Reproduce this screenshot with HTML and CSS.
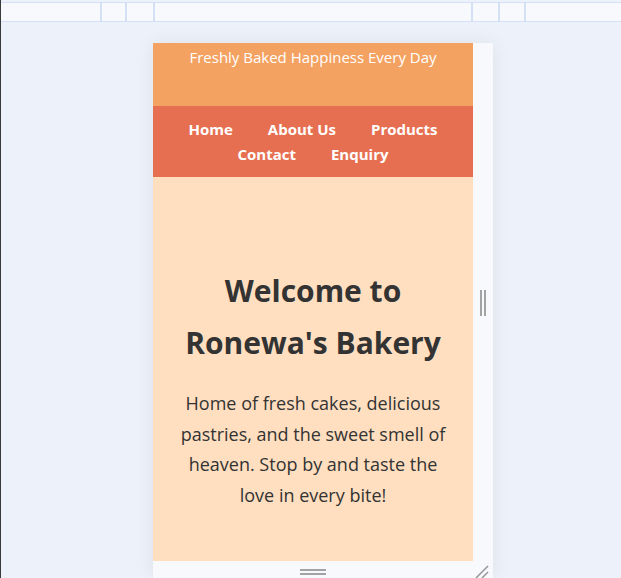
FILE: index.html
```html
<!DOCTYPE html>
<html lang="en">
<head>
<meta charset="utf-8">
<title>Ronewa's Bakery</title>
<link rel="stylesheet" href="styles.css">
</head>
<body>
<div class="app">
  <div class="ruler">
    <div class="seg s1"></div>
    <div class="seg s2"></div>
    <div class="seg s3"></div>
    <div class="seg s4"></div>
    <div class="seg s5"></div>
    <div class="seg s6"></div>
    <div class="seg rest"></div>
  </div>
  <div class="stage">
    <div class="device">
      <div class="device-row">
        <div class="viewport">
          <header class="site-header">
            <p class="tagline">Freshly Baked Happiness Every Day</p>
          </header>
          <nav class="site-nav">
            <a href="#">Home</a>
            <a href="#">About Us</a>
            <a href="#">Products</a>
            <a href="#">Contact</a>
            <a href="#">Enquiry</a>
          </nav>
          <section class="hero">
            <h1>Welcome to Ronewa's Bakery</h1>
            <p>Home of fresh cakes, delicious pastries, and the sweet smell of heaven. Stop by and taste the love in every bite!</p>
          </section>
        </div>
        <div class="side-handle"><span class="grip-v"></span></div>
      </div>
      <div class="bottom-handle">
        <span class="grip-h"></span>
        <svg class="corner" width="14" height="14" viewBox="0 0 14 14"><path d="M1 13 L13 1 M7 13 L13 7" stroke="#9a9a9a" stroke-width="1.6" fill="none"/></svg>
      </div>
    </div>
  </div>
</div>
</body>
</html>
```

FILE: styles.css
```css
html, body {
  margin: 0;
  padding: 0;
  height: 100%;
}
body {
  background: #edf1f9;
  font-family: "Open Sans", "Liberation Sans", sans-serif;
  border-left: 1px solid #3a3a3a;
  overflow: hidden;
}
.app {
  display: flex;
  flex-direction: column;
}
.ruler {
  margin-top: 2px;
  height: 18px;
  border-top: 1px solid #d3e0f6;
  border-bottom: 1px solid #d3e0f6;
  background: #f7f9fd;
  display: flex;
}
.seg {
  flex: none;
  border-right: 2px solid #d3e0f6;
  box-sizing: border-box;
  height: 18px;
}
.s1 { width: 101px; }
.s2 { width: 25px; }
.s3 { width: 28px; }
.s4 { width: 318px; }
.s5 { width: 27px; }
.s6 { width: 26px; }
.rest { flex: 1; border-right: none; }

.stage {
  padding: 21px 0 0 152px;
}
.device {
  width: 340px;
  background: #f7f9fd;
  box-shadow: 0 0 18px rgba(0, 0, 0, 0.07);
}
.device-row {
  display: flex;
}
.viewport {
  width: 320px;
  display: flex;
  flex-direction: column;
}
.side-handle {
  flex: 1;
  display: flex;
  align-items: flex-start;
  justify-content: center;
  padding-top: 247px;
}
.grip-v {
  width: 2px;
  height: 26px;
  border-left: 2px solid #a3a3a3;
  border-right: 2px solid #a3a3a3;
}
.bottom-handle {
  height: 17px;
  display: flex;
  justify-content: center;
  align-items: flex-start;
  position: relative;
}
.grip-h {
  margin-top: 8px;
  margin-right: 20px;
  width: 26px;
  height: 2px;
  border-top: 2px solid #a3a3a3;
  border-bottom: 2px solid #a3a3a3;
}
.corner {
  position: absolute;
  right: 4px;
  top: 4px;
}

.site-header {
  background: #f4a261;
  height: 63px;
  box-sizing: border-box;
  padding-top: 4px;
}
.tagline {
  margin: 0;
  color: #fff;
  font-size: 15px;
  line-height: 20px;
  text-align: center;
}
.site-nav {
  background: #e76f51;
  padding: 11px 20px 10px;
  display: flex;
  flex-wrap: wrap;
  justify-content: center;
  column-gap: 35px;
  line-height: 25px;
}
.site-nav a {
  color: #fff;
  font-weight: 700;
  font-size: 15px;
  text-decoration: none;
}
.hero {
  background: #ffdfc0;
  padding: 88px 20px 51px;
  text-align: center;
  color: #333;
}
.hero h1 {
  margin: 0 0 19px;
  font-size: 30px;
  line-height: 52px;
  font-weight: 700;
}
.hero p {
  margin: 0;
  font-size: 18px;
  line-height: 30.5px;
}
```
